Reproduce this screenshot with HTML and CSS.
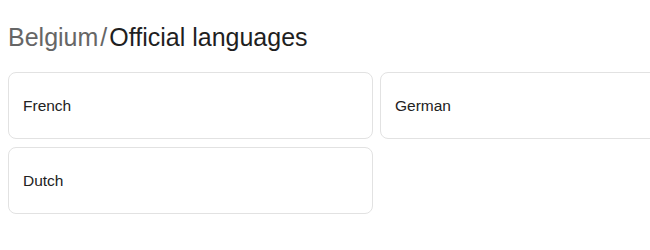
FILE: index.html
```html
<!DOCTYPE html>
<html>
<head>
<meta charset="utf-8">
<link rel="stylesheet" href="styles.css">
</head>
<body>
<div class="page">
  <h1 class="crumbs"><span class="parent">Belgium</span><span class="sep">/</span><span class="current">Official languages</span></h1>
  <div class="grid">
    <div class="card">French</div>
    <div class="card">German</div>
    <div class="card">Dutch</div>
  </div>
</div>
</body>
</html>
```
FILE: styles.css
```css
html, body {
  margin: 0;
  background: #fff;
  overflow: hidden;
}
body {
  padding: 8px 0 8px 8px;
  font-family: "Liberation Sans", Arial, sans-serif;
}
.page {
  padding-top: 15px;
  overflow: hidden;
}
.crumbs {
  margin: 0 0 20px 0;
  font-size: 25px;
  line-height: 29px;
  font-weight: normal;
  white-space: nowrap;
}
.parent {
  color: #666;
}
.sep {
  color: #666;
  margin: 0 2px;
}
.current {
  color: #1f1f1f;
}
.grid {
  display: grid;
  grid-template-columns: 365px 365px;
  gap: 8px 7px;
}
.card {
  box-sizing: border-box;
  height: 67px;
  border: 1px solid #e2e2e2;
  border-radius: 8px;
  padding: 0 14px;
  display: flex;
  align-items: center;
  font-size: 15.5px;
  color: #222;
}
```
